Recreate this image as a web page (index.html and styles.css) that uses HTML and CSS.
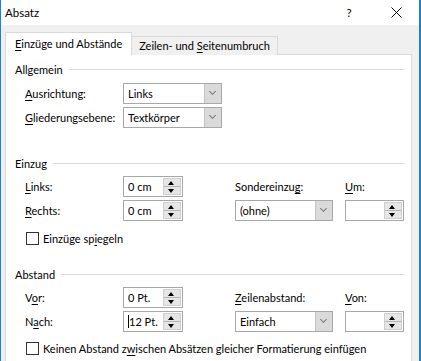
FILE: index.html
```html
<!DOCTYPE html>
<html lang="de">
<head>
  <meta charset="UTF-8" />
  <title>Absatz</title>
  <link rel="stylesheet" href="styles.css">
</head>
<body>

  <div class="window">
    <div class="titlebar">
      <span class="title">Absatz</span>
      <span class="help">?</span>
      <span class="close">
        <svg width="11" height="11" viewBox="0 0 11 11"><path d="M0.5 0.5 L10.5 10.5 M10.5 0.5 L0.5 10.5" stroke="#000" stroke-width="1" fill="none"/></svg>
      </span>
    </div>

    <div class="client">
      <div class="tabs">
        <div class="tab active"><u>E</u>inzüge und Abstände</div>
        <div class="tab">Zeilen- und <u>S</u>eitenumbruch</div>
      </div>

      <div class="panel">

        <!-- Allgemein -->
        <div class="group-head"><span>Allgemein</span><span class="rule"></span></div>
        <div class="grid general">
          <label><u>A</u>usrichtung:</label>
          <div class="combo"><span class="val">Links</span><span class="arrow"></span></div>
          <label><u>G</u>liederungsebene:</label>
          <div class="combo"><span class="val">Textkörper</span><span class="arrow"></span></div>
        </div>

        <!-- Einzug -->
        <div class="group-head indent"><span>Einzug</span><span class="rule"></span></div>
        <div class="grid spacing">
          <label><u>L</u>inks:</label>
          <div class="spin"><span class="val">0 cm</span><span class="btns"><i class="up"></i><i class="down"></i></span></div>
          <span></span>
          <label>Sondereinzu<u>g</u>:</label>
          <span></span>
          <label><u>U</u>m:</label>

          <label><u>R</u>echts:</label>
          <div class="spin"><span class="val">0 cm</span><span class="btns"><i class="up"></i><i class="down"></i></span></div>
          <span></span>
          <div class="combo"><span class="val">(ohne)</span><span class="arrow"></span></div>
          <span></span>
          <div class="spin"><span class="val"></span><span class="btns"><i class="up"></i><i class="down"></i></span></div>
        </div>
        <div class="check mirror"><span class="box"></span><span>Einzüge sp<u>i</u>egeln</span></div>

        <!-- Abstand -->
        <div class="group-head distance"><span>Abstand</span><span class="rule"></span></div>
        <div class="grid spacing">
          <label>V<u>o</u>r:</label>
          <div class="spin"><span class="val">0 Pt.</span><span class="btns"><i class="up"></i><i class="down"></i></span></div>
          <span></span>
          <label><u>Z</u>eilenabstand:</label>
          <span></span>
          <label><u>V</u>on:</label>

          <label>N<u>a</u>ch:</label>
          <div class="spin"><span class="val"><b class="caret"></b>12 Pt.</span><span class="btns"><i class="up"></i><i class="down"></i></span></div>
          <span></span>
          <div class="combo"><span class="val">Einfach</span><span class="arrow"></span></div>
          <span></span>
          <div class="spin"><span class="val"></span><span class="btns"><i class="up"></i><i class="down"></i></span></div>
        </div>
        <div class="check nospace"><span class="box"></span><span>Keinen Abstand z<u>w</u>ischen Absätzen gleicher Formatierung einfügen</span></div>

      </div>
    </div>
  </div>

</body>
</html>
```

FILE: styles.css
```css
body {
  margin: 0;
  padding: 0;
  width: 421px;
  height: 361px;
  overflow: hidden;
  font-family: 'Lato', 'Noto Sans', sans-serif;
  font-size: 11px;
  color: #000;
  background: #f0f0f0;
}

u {
  text-decoration: underline;
  text-underline-offset: 2px;
}

.window {
  height: 361px;
  overflow: hidden;
  border-left: 1px solid #1c7fd6;
  border-right: 2px solid #1c7fd6;
  background: #f0f0f0;
  display: flex;
  flex-direction: column;
}

.titlebar {
  flex-shrink: 0;
  height: 25px;
  background: #fff;
  display: flex;
  align-items: center;
  padding-left: 4px;
  font-size: 11.5px;
}

.title {
  flex: 1;
}

.help {
  width: 46px;
  text-align: center;
  margin-right: 1px;
}

.close {
  width: 46px;
  display: flex;
  justify-content: center;
}

.client {
  flex-shrink: 0;
  padding: 8px 0 0 4px;
}

.tabs {
  display: flex;
  align-items: flex-end;
  height: 22px;
  margin-bottom: -1px;
  position: relative;
  z-index: 1;
}

.tab {
  height: 19px;
  box-sizing: border-box;
  padding: 0 7px;
  border: 1px solid #d9d9d9;
  border-bottom: none;
  border-left: none;
  line-height: 17px;
  background: #f0f0f0;
}

.tab.active {
  height: 23px;
  background: #fff;
  border-left: 1px solid #d9d9d9;
  padding: 0 9px;
  line-height: 21px;
}

.panel {
  width: 407px;
  height: 320px;
  box-sizing: border-box;
  background: #fff;
  border: 1px solid #d9d9d9;
  padding: 6px 6px 0 9px;
}

.group-head {
  display: flex;
  align-items: center;
  gap: 6px;
  height: 16px;
}

.group-head .rule {
  flex: 1;
  height: 1px;
  background: #dcdcdc;
}

.group-head.indent {
  margin-top: 27px;
}

.group-head.distance {
  margin-top: 20px;
}

.grid {
  display: grid;
  grid-auto-rows: 21px;
  row-gap: 3px;
  align-items: center;
  margin: 5px 0 0 10px;
}

.grid.general {
  grid-template-columns: 98px 99px;
  margin-top: 6px;
}

.grid.spacing {
  grid-template-columns: 98px 60px 52px 98px 12px 59px;
}

label {
  white-space: nowrap;
}

.combo,
.spin {
  height: 21px;
  box-sizing: border-box;
  border: 1px solid #a8a8a8;
  background: #fff;
  display: flex;
  align-items: stretch;
}

.val {
  flex: 1;
  padding-left: 4px;
  white-space: nowrap;
  display: flex;
  align-items: center;
}

.combo .arrow {
  width: 16px;
  background: #dadada;
  border-left: 1px solid #c4c4c4;
  position: relative;
}

.combo .arrow::after {
  content: '';
  position: absolute;
  left: 5px;
  top: 5px;
  width: 4px;
  height: 4px;
  border-right: 1px solid #7a7a7a;
  border-bottom: 1px solid #7a7a7a;
  transform: rotate(45deg);
}

.spin .btns {
  width: 16px;
  margin: 1px 1px 1px 0;
  background: #e6e6e6;
  border: 1px solid #cfcfcf;
  display: flex;
  flex-direction: column;
}

.spin .btns i {
  flex: 1;
  position: relative;
}

.spin .btns i.up {
  border-bottom: 1px solid #b5b5b5;
}

.spin .btns i::after {
  content: '';
  position: absolute;
  left: 4px;
  width: 0;
  height: 0;
  border-left: 3px solid transparent;
  border-right: 3px solid transparent;
}

.spin .btns i.up::after {
  top: 2px;
  border-bottom: 4px solid #000;
}

.spin .btns i.down::after {
  top: 2px;
  border-top: 4px solid #000;
}

.caret {
  display: inline-block;
  width: 1px;
  height: 13px;
  background: #000;
}

.check {
  display: flex;
  align-items: center;
  height: 16px;
  margin-left: 11px;
  white-space: nowrap;
}

.check .box {
  width: 13px;
  height: 13px;
  box-sizing: border-box;
  border: 1px solid #333;
  background: #fff;
  margin-right: 4px;
}

.check.mirror {
  margin-top: 9px;
}

.check.nospace {
  margin-top: 8px;
}
```
